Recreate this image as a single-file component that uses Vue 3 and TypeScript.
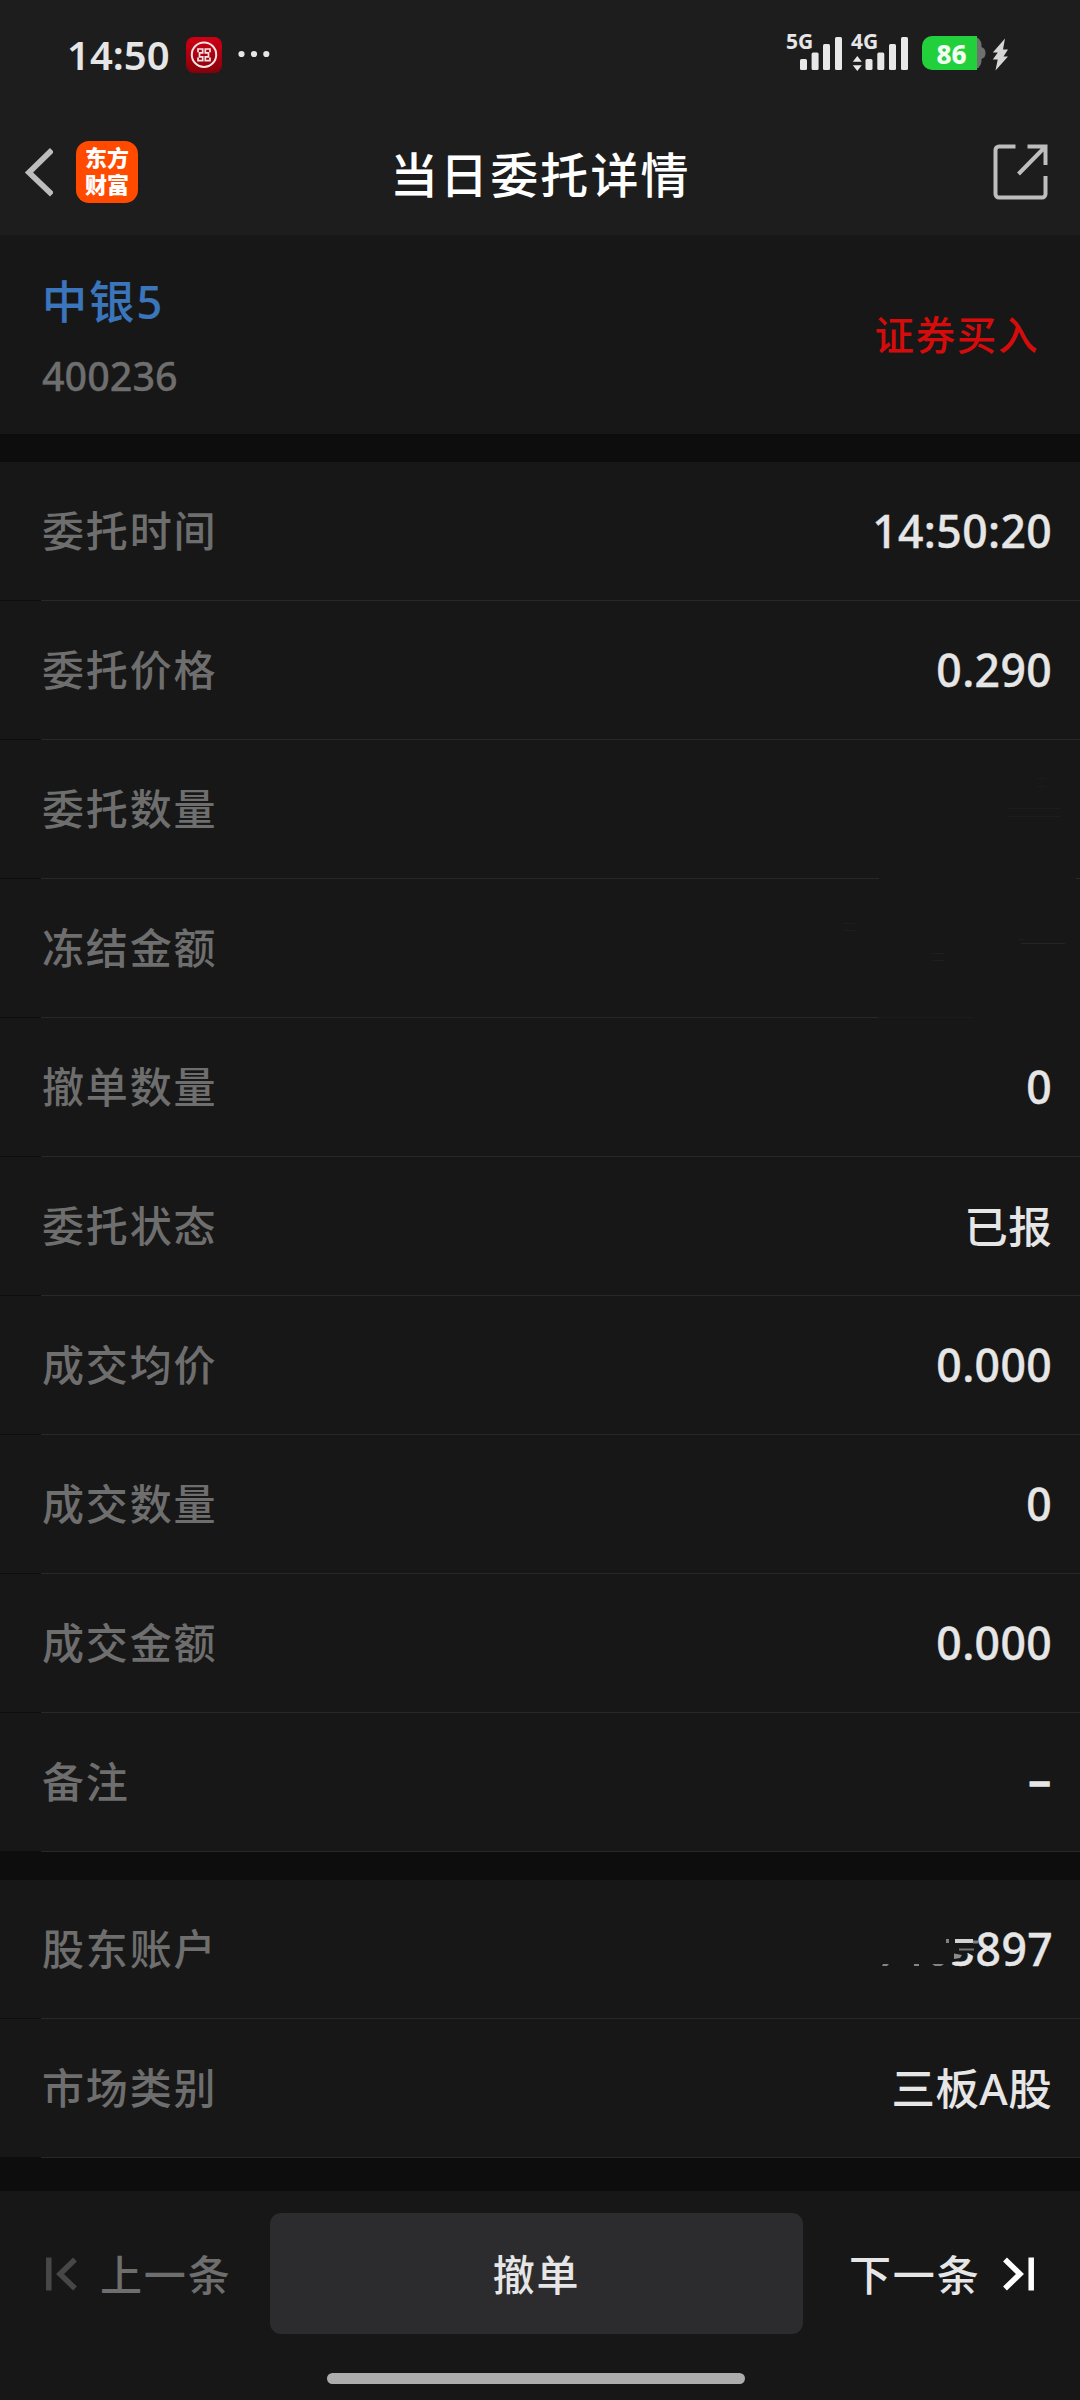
<script setup lang="ts">
interface Field {
  label: string
  value: string
  kind?: 'dash' | 'text'
  erased?: 'quantity' | 'amount' | 'account'
}

const order: Field[] = [
  { label: '委托时间', value: '14:50:20' },
  { label: '委托价格', value: '0.290' },
  { label: '委托数量', value: '', erased: 'quantity' },
  { label: '冻结金额', value: '', erased: 'amount' },
  { label: '撤单数量', value: '0' },
  { label: '委托状态', value: '已报', kind: 'text' },
  { label: '成交均价', value: '0.000' },
  { label: '成交数量', value: '0' },
  { label: '成交金额', value: '0.000' },
  { label: '备注', value: '–', kind: 'dash' },
]

const account: Field[] = [
  { label: '股东账户', value: '5897', erased: 'account' },
  { label: '市场类别', value: '三板A股', kind: 'text' },
]

const sections: Field[][] = [order, account]
</script>

<template>
  <div class="screen">
    <header class="top">
      <div class="status">
        <span class="clock">14:50</span>
        <svg class="bank" width="36" height="36" viewBox="0 0 36 36">
          <defs>
            <linearGradient id="bankRed" x1="0" y1="0" x2="0" y2="1">
              <stop offset="0" stop-color="#d00014" />
              <stop offset="1" stop-color="#86000a" />
            </linearGradient>
          </defs>
          <rect width="36" height="36" rx="8" fill="url(#bankRed)" />
          <g fill="none" stroke="#f2e4e4">
            <circle cx="18" cy="17.7" r="12.2" stroke-width="2" />
            <path d="M11.200 12h5.500v3.800h-3.200v4h3.200v3.800h-5.500M24.800 12h-5.500v3.800h3.200v4h-3.200v3.800h5.500M12 11.200v4M24 11.200v4M12 20.400v4M24 20.400v4" stroke-width="1.700" />
          </g>
        </svg>
        <svg class="dots" width="32" height="8" viewBox="0 0 32 8" fill="#e6e6e6">
          <circle cx="3.500" cy="4" r="3.100" />
          <circle cx="16" cy="4" r="3.100" />
          <circle cx="28.300" cy="4" r="3.100" />
        </svg>
        <div class="signal">
          <span class="net">5G</span>
          <svg width="58" height="38" viewBox="0 0 58 38" fill="#e8e8e8">
            <rect x="14" y="27" width="7" height="11" rx="1.500" />
            <rect x="25.600" y="20.500" width="7" height="17.500" rx="1.500" />
            <rect x="37" y="12" width="7" height="26" rx="1.500" />
            <rect x="49" y="5" width="7" height="33" rx="1.500" />
          </svg>
        </div>
        <div class="signal second">
          <span class="net">4G</span>
          <svg width="58" height="39" viewBox="0 0 58 39" fill="#e8e8e8">
            <path d="M1.800 29.800 6.300 24l4.500 5.800zM1.800 33.200h9L6.300 39z" />
            <rect x="14.500" y="27" width="7" height="11" rx="1.500" />
            <rect x="26.300" y="20.500" width="7" height="17.500" rx="1.500" />
            <rect x="38" y="12" width="7" height="26" rx="1.500" />
            <rect x="50" y="5" width="7" height="33" rx="1.500" />
          </svg>
        </div>
        <div class="battery">
          <svg width="64" height="34" viewBox="0 0 64 34">
            <rect x="38" y="0" width="21.500" height="34" rx="9" fill="#707070" />
            <path d="M59 11c3 .5 4.500 2.500 4.500 6s-1.500 5.500-4.500 6z" fill="#707070" />
            <path d="M10 0H55V34H10A10 10 0 0 1 0 24V10A10 10 0 0 1 10 0z" fill="#22d03c" />
          </svg>
          <span class="percent">86</span>
        </div>
        <svg class="bolt" width="17" height="33" viewBox="0 0 17 33" fill="#d6d6d6">
          <path d="M13 .500 .800 14.500h5L.800 21.500h4.900L3.500 32.500 16 18.500h-4.500l4.500-7h-5z" />
        </svg>
      </div>
      <div class="nav">
        <svg class="back" width="30" height="52" viewBox="0 0 30 52">
          <path d="M29 4 6 26.500l23 22" fill="none" stroke="#bdbdbd" stroke-width="5.800" />
        </svg>
        <div class="logo"><span>东方</span><span>财富</span></div>
        <h1>当日委托详情</h1>
        <svg class="share" width="56" height="56" viewBox="0 0 56 56" fill="none" stroke="#bebebe" stroke-width="4">
          <path d="M22.500 2.500H6a3.500 3.500 0 0 0-3.500 3.500v44a3.500 3.500 0 0 0 3.500 3.500h43a3.500 3.500 0 0 0 3.500-3.500V32" />
          <path d="M34.500 2.500h18v18.500M52.500 2.500 25.500 30" />
        </svg>
      </div>
    </header>

    <section class="security">
      <div class="who">
        <span class="name">中银5</span>
        <span class="code">400236</span>
      </div>
      <span class="side">证券买入</span>
    </section>

    <section v-for="(fields, s) in sections" :key="s" class="group">
      <div v-for="field in fields" :key="field.label" class="row" :class="field.erased">
        <span class="label">{{ field.label }}</span>
        <svg v-if="field.erased === 'quantity'" class="trace" width="240" height="138" viewBox="0 0 240 138">
          <path d="M168 68.500h53M168 76.500h53M197 38.500h9M197 46.500h9" stroke="#1c1c1c" />
        </svg>
        <svg v-else-if="field.erased === 'amount'" class="trace" width="240" height="138" viewBox="0 0 240 138">
          <path d="M5 44.500h10M5 51.500h10M93 74.500h11M93 81.500h11M179 60.500h5" stroke="#1f1f1f" />
          <path d="M181 64.500h44" stroke="#242424" />
        </svg>
        <span v-else class="value" :class="field.kind">
          {{ field.value }}
          <svg v-if="field.erased === 'account'" class="smudge" width="174" height="46" viewBox="0 -6 174 46">
            <path d="M62-6H97.500V17.500H95V24L88 20H79V28L62 31z" fill="#171717" />
            <path d="M75 6h18v4H75z" fill="#d2d2d2" />
            <path d="M93 7.500h5v3h-5zM66 6h3v4h-3z" fill="#808080" />
            <path d="M79 15.500h15v2H79z" fill="#777" />
            <path d="M74 20.500l8 1.500-2 3-6 1z" fill="#8c8c8c" />
            <path d="M3 31h6l-2 2H2zM34 31h5v2h-5zM52 31h12l-3 2h-6z" fill="#858585" />
          </svg>
        </span>
      </div>
    </section>

    <footer class="bar">
      <button class="step prev" type="button">
        <svg width="32" height="34" viewBox="0 0 32 34" fill="none" stroke="#474747" stroke-width="5.500">
          <path d="M2.800.500v33M29 2.500 14 17 29 31.500" />
        </svg>
        <span>上一条</span>
      </button>
      <button class="cancel" type="button"><span>撤单</span></button>
      <button class="step next" type="button">
        <span>下一条</span>
        <svg width="32" height="34" viewBox="0 0 32 34" fill="none" stroke="#fff" stroke-width="5.500">
          <path d="M28.200.500v33M2 2.500 17 17 2 31.500" />
        </svg>
      </button>
      <div class="home"></div>
    </footer>
  </div>
</template>

<style>
body {
  background: #0d0d0d;
}
</style>

<style scoped>
.screen {
  display: flex;
  flex-direction: column;
  width: 1080px;
  height: 2400px;
  overflow: hidden;
  background: #0d0d0d;
  color: #e6e6e6;
  font-family: "Noto Sans", "Noto Sans CJK SC", sans-serif;
  font-weight: 500;
}
svg {
  display: block;
  flex: none;
}
.top {
  height: 235px;
  background: #1d1d1d;
}
.status {
  display: flex;
  align-items: flex-start;
  height: 109px;
  padding-left: 67px;
}
.clock {
  width: 119px;
  margin-top: 30px;
  font-size: 40px;
  font-weight: 600;
  line-height: 50px;
}
.bank {
  margin-top: 37px;
}
.dots {
  margin: 50px 0 0 16px;
}
.signal {
  position: relative;
  width: 58px;
  margin: 32px 0 0 516px;
}
.signal.second {
  margin-left: 7px;
}
.net {
  position: absolute;
  left: 0;
  top: -3px;
  font-size: 21px;
  font-weight: 700;
  line-height: 24px;
}
.battery {
  position: relative;
  margin: 36px 0 0 13px;
}
.percent {
  position: absolute;
  left: 0;
  top: 0;
  width: 59px;
  text-align: center;
  color: #f4fff4;
  font-size: 26px;
  font-weight: 800;
  line-height: 37px;
}
.bolt {
  margin: 38px 0 0 6px;
}
.nav {
  display: flex;
  align-items: center;
  height: 126px;
}
.back {
  margin-left: 23px;
}
.logo {
  display: flex;
  flex-direction: column;
  align-items: center;
  justify-content: center;
  width: 62px;
  height: 60px;
  margin-left: 23px;
  padding-bottom: 2px;
  border-radius: 13px;
  background: #ff4a00;
  color: #fff;
  font-size: 22px;
  font-weight: 900;
  line-height: 27px;
}
h1 {
  flex: 1;
  margin: 5px 0 0 252px;
  color: #fff;
  font-size: 48px;
  font-weight: 500;
  line-height: 60px;
  letter-spacing: 2.100px;
}
.share {
  margin-right: 31px;
}
.security {
  display: flex;
  align-items: center;
  justify-content: space-between;
  height: 199px;
  padding: 0 41px 0 42px;
  background: #171717;
}
.who {
  display: flex;
  flex-direction: column;
  padding-top: 8px;
}
.name {
  color: #3b76bd;
  font-size: 45px;
  line-height: 74px;
  letter-spacing: 2.300px;
  -webkit-text-stroke: 0.200px currentColor;
}
.code {
  color: #6e6e6e;
  font-size: 39.500px;
  line-height: 74px;
  -webkit-text-stroke: 0.300px currentColor;
}
.side {
  padding-bottom: 4px;
  color: #d40c0c;
  font-size: 39.500px;
  letter-spacing: 1.600px;
}
.group {
  margin-top: 28px;
}
.row {
  display: flex;
  align-items: center;
  justify-content: space-between;
  height: 138px;
  padding: 0 28px 0 42px;
  border-bottom: 1px solid transparent;
  background: linear-gradient(#171717, #171717) padding-box,
    linear-gradient(90deg, #0d0d0d 41px, #282828 41px) border-box;
}
.row.quantity {
  background: linear-gradient(#171717, #171717) padding-box,
    linear-gradient(90deg, #0d0d0d 41px, #282828 41px 879px, #171717 879px 1076px, #282828 1076px) border-box;
}
.row.amount {
  background: linear-gradient(#171717, #171717) padding-box,
    linear-gradient(90deg, #0d0d0d 41px, #282828 41px 878px, #1b1b1b 878px 973px, #171717 973px) border-box;
}
.label {
  padding-bottom: 1px;
  color: #6e6e6e;
  font-size: 42px;
  line-height: 60px;
  letter-spacing: 1.850px;
}
.value {
  position: relative;
  padding-bottom: 1px;
  font-size: 44.500px;
  line-height: 60px;
  letter-spacing: 0.350px;
  white-space: nowrap;
  -webkit-text-stroke: 0.400px currentColor;
}
.value.text {
  font-size: 43.500px;
  -webkit-text-stroke-width: 0;
}
.value.dash {
  margin-right: 1px;
  padding-bottom: 6px;
  -webkit-text-stroke-width: 1.400px;
}
.account .value {
  margin-right: -1px;
}
.trace {
  margin-right: -28px;
}
.smudge {
  position: absolute;
  right: -1px;
  top: 8px;
}
.bar {
  display: grid;
  grid-template-columns: 270px 533px 277px;
  grid-template-rows: 121px auto;
  height: 187px;
  margin-top: 33px;
  padding-top: 22px;
  background: #171717;
}
button {
  padding: 0;
  border: 0;
  background: none;
  color: #e6e6e6;
  font: inherit;
  font-size: 42px;
  letter-spacing: 1.850px;
}
button span {
  display: block;
  padding-bottom: 2px;
}
.cancel {
  border-radius: 11px;
  background: #2c2c2e;
}
.step {
  display: flex;
  align-items: center;
}
.prev {
  padding-left: 46px;
  gap: 22px;
  color: #6e6e6e;
}
.next {
  padding-left: 46px;
  gap: 22px;
}
.home {
  grid-column: 1 / -1;
  justify-self: center;
  width: 418px;
  height: 11px;
  margin: 39px 8px 0 0;
  border-radius: 6px;
  background: #adadad;
}
</style>
